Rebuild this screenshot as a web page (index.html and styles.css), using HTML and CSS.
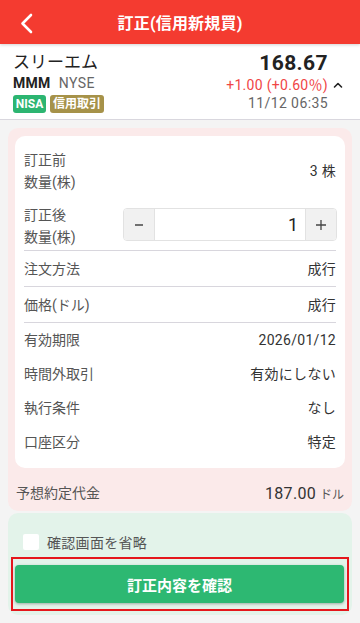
FILE: index.html
```html
<!DOCTYPE html>
<html lang="ja">
<head>
<meta charset="utf-8">
<meta name="viewport" content="width=device-width, initial-scale=1">
<link rel="stylesheet" href="styles.css">
</head>
<body>
<header class="appbar">
  <svg class="back" width="20" height="24" viewBox="0 0 20 24"><path d="M13 4 L4.5 12.5 L13 21" fill="none" stroke="#fff" stroke-width="2.6" stroke-linecap="round" stroke-linejoin="round"/></svg>
  <h1 class="title">訂正(信用新規買)</h1>
</header>
<section class="stock">
  <div class="stock-left">
    <div class="stock-name">スリーエム</div>
    <div class="stock-code"><span class="ticker">MMM</span><span class="market">NYSE</span></div>
    <div class="badges"><span class="badge nisa">NISA</span><span class="badge margin">信用取引</span></div>
  </div>
  <div class="stock-right">
    <div class="price">168.67</div>
    <div class="change">+1.00 (+0.60％)<svg class="caret" width="10" height="8" viewBox="0 0 10 8"><path d="M1.5 6 L5 2.5 L8.5 6" fill="none" stroke="#222" stroke-width="1.6" stroke-linecap="round" stroke-linejoin="round"/></svg></div>
    <div class="time">11/12 06:35</div>
  </div>
</section>
<main class="content">
  <section class="order-panel">
    <div class="card">
      <div class="row row-tall first">
        <div class="label">訂正前<br>数量(株)</div>
        <div class="value">3 株</div>
      </div>
      <div class="row row-tall second">
        <div class="label">訂正後<br>数量(株)</div>
        <div class="stepper">
          <button class="step-btn" type="button"><svg width="10" height="10" viewBox="0 0 10 10"><path d="M1 5 H9" stroke="#444" stroke-width="1.3"/></svg></button>
          <div class="step-value">1</div>
          <button class="step-btn" type="button"><svg width="12" height="12" viewBox="0 0 12 12"><path d="M1 6 H11 M6 1 V11" stroke="#444" stroke-width="1.3"/></svg></button>
        </div>
      </div>
      <div class="row bordered">
        <div class="label">注文方法</div>
        <div class="value">成行</div>
      </div>
      <div class="row bordered">
        <div class="label">価格(ドル)</div>
        <div class="value">成行</div>
      </div>
      <div class="row">
        <div class="label">有効期限</div>
        <div class="value">2026/01/12</div>
      </div>
      <div class="row">
        <div class="label">時間外取引</div>
        <div class="value">有効にしない</div>
      </div>
      <div class="row">
        <div class="label">執行条件</div>
        <div class="value">なし</div>
      </div>
      <div class="row">
        <div class="label">口座区分</div>
        <div class="value">特定</div>
      </div>
    </div>
    <div class="estimate">
      <div class="label">予想約定代金</div>
      <div class="est-value"><span class="est-num">187.00</span><span class="est-unit">ドル</span></div>
    </div>
  </section>
  <section class="confirm-panel">
    <label class="skip"><span class="checkbox"></span><span class="skip-text">確認画面を省略</span></label>
    <div class="highlight">
      <button class="confirm-btn" type="button">訂正内容を確認</button>
    </div>
  </section>
</main>
</body>
</html>
```
FILE: styles.css
```css
* { box-sizing: border-box; }
html, body { margin: 0; padding: 0; }
body {
  width: 360px;
  height: 623px;
  overflow: hidden;
  background: #f4f4f4;
  font-family: Roboto, "Noto Sans CJK JP", sans-serif;
  color: #333;
}
.appbar {
  height: 44px;
  background: #f43b30;
  display: flex;
  align-items: center;
  justify-content: center;
  position: relative;
  box-shadow: 0 1px 3px rgba(0,0,0,0.18);
  z-index: 2;
}
.back { position: absolute; left: 18px; top: 11px; }
.title {
  margin: 0;
  color: #fff;
  font-size: 16px;
  font-weight: 700;
  letter-spacing: 0.2px;
}
.stock {
  background: #fff;
  height: 76px;
  padding: 6px 17px 0 13px;
  display: flex;
  justify-content: space-between;
  border-bottom: 1px solid #d9d7de;
}
.stock-name { font-size: 17px; line-height: 24px; color: #222; }
.stock-code { font-size: 14px; line-height: 18px; }
.ticker { font-weight: 700; color: #222; letter-spacing: 0.3px; }
.market { color: #666; margin-left: 8px; letter-spacing: 0.5px; }
.badges { display: flex; gap: 4px; margin-top: 3px; }
.badge {
  height: 18px;
  border-radius: 3px;
  color: #fff;
  font-size: 12px;
  font-weight: 700;
  line-height: 18px;
  text-align: center;
}
.nisa { background: #2cb571; width: 33px; }
.margin { background: #a69249; width: 54px; }
.stock-right { text-align: right; }
.price { font-size: 21px; font-weight: 700; line-height: 26px; color: #222; margin-right: 15px; letter-spacing: 0.4px; }
.change { font-size: 14px; line-height: 18px; color: #f04545; letter-spacing: 0.3px; }
.caret { margin-left: 5px; vertical-align: 1px; }
.time { font-size: 14px; line-height: 19px; color: #666; margin-right: 15px; letter-spacing: 0.4px; }

.content { padding: 8px 8px 0 8px; }
.order-panel {
  background: #fbeaea;
  border-radius: 10px;
  padding: 8px 7px 0 7px;
  height: 383px;
}
.card {
  background: #fff;
  border-radius: 10px;
  padding: 13px 9px 9px 9px;
}
.row {
  display: flex;
  align-items: center;
  justify-content: space-between;
  height: 34px;
  font-size: 14px;
}
.row.bordered { height: 36px; border-bottom: 1px solid #d8d6dd; }
.row-tall { height: 44px; }
.row.first { margin-bottom: 11px; }
.row.second { height: 47px; align-items: flex-start; border-bottom: 1px solid #d8d6dd; }
.label { color: #555; line-height: 22px; font-size: 14px; }
.value { color: #333; line-height: 22px; letter-spacing: 0.3px; }
.stepper {
  width: 214px;
  height: 33px;
  margin-top: 4px;
  border: 1px solid #e2e2e2;
  border-radius: 4px;
  display: flex;
  overflow: hidden;
  margin-right: -1px;
}
.step-btn {
  width: 30px;
  border: 0;
  background: #f1f1f1;
  padding: 0;
  display: flex;
  align-items: center;
  justify-content: center;
}
.step-value {
  flex: 1;
  background: #fff;
  border-left: 1px solid #e2e2e2;
  border-right: 1px solid #e2e2e2;
  text-align: right;
  padding-right: 7px;
  font-size: 18px;
  line-height: 31px;
  color: #222;
}
.estimate {
  display: flex;
  justify-content: space-between;
  align-items: center;
  height: 50px;
  padding: 0 1px;
}
.est-num { font-size: 16px; color: #333; letter-spacing: 0.3px; }
.est-unit { font-size: 12px; color: #555; margin-left: 4px; }
.confirm-panel {
  margin-top: 2px;
  background: #e3f3ea;
  border-radius: 10px;
  height: 102px;
  padding: 21px 3px 0 3px;
}
.skip { display: flex; align-items: center; padding-left: 12px; height: 16px; }
.checkbox { width: 16px; height: 16px; background: #fff; border-radius: 2px; }
.skip-text { margin-left: 8px; font-size: 14px; color: #555; letter-spacing: 0.3px; }
.highlight {
  margin-top: 7px;
  border: 2px solid #e5161c;
  height: 54px;
  padding: 6px 3px 0 2px;
}
.confirm-btn {
  display: block;
  width: 100%;
  height: 38px;
  border: 0;
  border-radius: 4px;
  background: #2db872;
  color: #fff;
  font-family: inherit;
  font-size: 15px;
  font-weight: 700;
  box-shadow: 0 1px 3px rgba(0,0,0,0.3);
}
```
